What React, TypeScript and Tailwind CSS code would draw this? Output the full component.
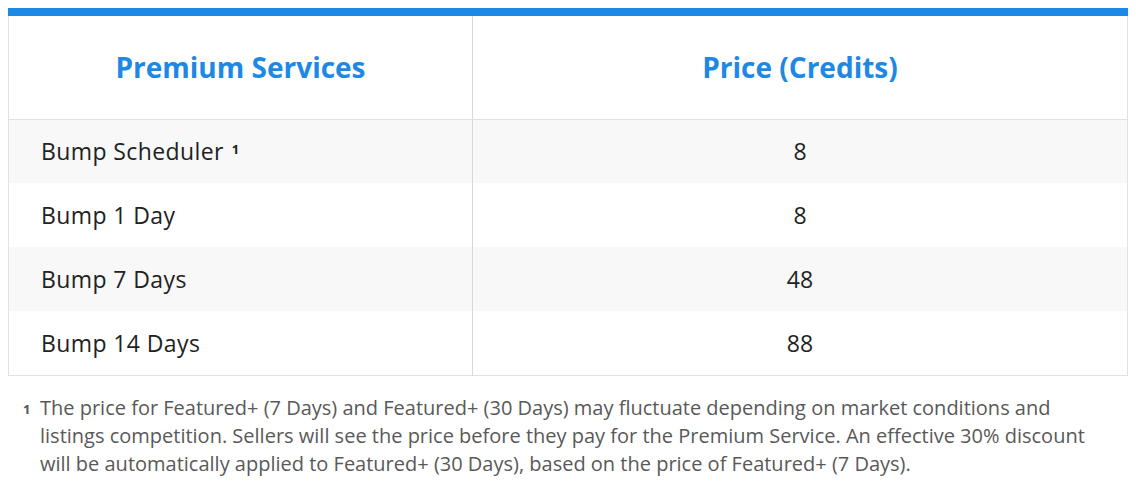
import React from 'react';

const rows = [
  { name: 'Bump Scheduler', note: true, price: '8' },
  { name: 'Bump 1 Day', note: false, price: '8' },
  { name: 'Bump 7 Days', note: false, price: '48' },
  { name: 'Bump 14 Days', note: false, price: '88' },
];

export default function App() {
  return (
    <div className="bg-white w-[1136px] h-[500px] pt-2 px-2" style={{ fontFamily: '"Open Sans", sans-serif' }}>
      <div className="h-2 bg-[#1e88e5]" />
      <table className="w-[1120px] border-collapse table-fixed">
        <colgroup>
          <col className="w-[464px]" />
          <col />
        </colgroup>
        <thead>
          <tr className="h-[103px]">
            <th className="border border-t-0 border-[#e2e2e2] border-r-[#d8d8d8] text-[28px] font-bold text-[#1e88e5] text-center">
              Premium Services
            </th>
            <th className="border border-t-0 border-[#e2e2e2] text-[28px] font-bold text-[#1e88e5] text-center">
              Price (Credits)
            </th>
          </tr>
        </thead>
        <tbody>
          {rows.map((row, i) => (
            <tr key={row.name} className={i % 2 === 0 ? 'h-[64px] bg-[#f8f8f8]' : 'h-[64px] bg-white'}>
              <td className="border-l border-r border-l-[#e2e2e2] border-r-[#d8d8d8] pl-8 text-[23px] tracking-[0.4px] text-[#222]">
                {row.name}
                {row.note && <span className="ml-2 text-[13px] font-bold align-[6px]">1</span>}
              </td>
              <td className="border-r border-[#e2e2e2] text-center text-[23px] text-[#222]">{row.price}</td>
            </tr>
          ))}
          <tr>
            <td colSpan={2} className="border-t border-[#e2e2e2] p-0" />
          </tr>
        </tbody>
      </table>
      <div className="flex mt-[18px] pl-[15px] pr-[40px]">
        <span className="w-[17px] shrink-0 text-[13px] font-bold text-[#555] leading-[28px] pt-[1px]">1</span>
        <p className="text-[20px] leading-[28px] text-[#595959]">
          The price for Featured+ (7 Days) and Featured+ (30 Days) may fluctuate depending on market conditions and listings competition. Sellers will see the price before they pay for the Premium Service. An effective 30% discount will be automatically applied to Featured+ (30 Days), based on the price of Featured+ (7 Days).
        </p>
      </div>
    </div>
  );
}
